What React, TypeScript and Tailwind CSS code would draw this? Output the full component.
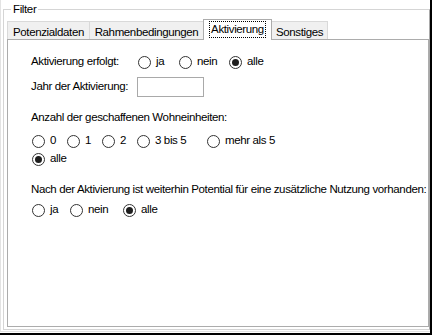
import React from 'react';

const font = { fontFamily: '"Liberation Sans", Arial, sans-serif' };

const Radio: React.FC<{ label: string; checked?: boolean; className?: string }> = ({ label, checked, className = '' }) => (
    <div className={`flex items-center gap-[5px] ${className}`}>
        <span className="w-[13px] h-[13px] shrink-0 rounded-full border border-[#333] bg-white flex items-center justify-center">
            {checked && <span className="w-[7px] h-[7px] rounded-full bg-[#1e1e1e]" />}
        </span>
        <span className="whitespace-nowrap">{label}</span>
    </div>
);

const tabs = [
    { name: 'Potenzialdaten', w: 'w-[83px]' },
    { name: 'Rahmenbedingungen', w: 'w-[115px]' },
    { name: 'Aktivierung', w: 'w-[69px]', active: true },
    { name: 'Sonstiges', w: 'w-[57px]' },
];

export default function App() {
    return (
        <div
            className="w-[432px] h-[335px] box-border bg-white border-r-2 border-b-2 border-black flex flex-col text-[11.5px] tracking-[-0.37px] text-black leading-none"
            style={font}
        >
            <div className="flex-1 mb-px border-l border-b border-[#e3e3e3] pt-[9px] pl-[2px] pb-px flex flex-col">
                {/* group box */}
                <div className="flex-1 relative border border-[#d5d5d5] border-r-[#a9a9a9] pt-[9px] pl-[3px] pb-[2px] flex flex-col">
                    <span className="absolute left-[7px] top-[-7px] bg-white px-[2px] leading-[13px]">Filter</span>

                    {/* tab strip */}
                    <div className="flex items-end h-[20px] relative z-10">
                        {tabs.map((t, i) =>
                            t.active ? (
                                <div
                                    key={t.name}
                                    className={`${t.w} -ml-px h-[21px] -mb-px bg-white border border-b-0 border-[#acacac] flex justify-center pt-px relative z-10`}
                                >
                                    <span className="h-[17px] px-[1px] border border-dotted border-black flex items-center">{t.name}</span>
                                </div>
                            ) : (
                                <div
                                    key={t.name}
                                    className={`${t.w} ${i > 0 ? '-ml-px' : ''} h-[18px] bg-[#f0f0f0] border border-b-0 border-[#d9d9d9] flex items-center justify-center pt-[4px]`}
                                >
                                    {t.name}
                                </div>
                            )
                        )}
                    </div>

                    {/* tab page */}
                    <div className="flex-1 border border-[#acacac] bg-white flex flex-col">
                        <div className="mt-[12px] h-[20px] flex items-center pl-[23px]">
                            <span className="w-[107px] whitespace-nowrap">Aktivierung erfolgt:</span>
                            <Radio label="ja" className="w-[41px]" />
                            <Radio label="nein" className="w-[50px]" />
                            <Radio label="alle" checked />
                        </div>

                        <div className="mt-[5px] h-[20px] flex items-center pl-[23px]">
                            <span className="w-[106px] whitespace-nowrap">Jahr der Aktivierung:</span>
                            <div className="w-[67px] h-[20px] border border-[#a9a9a9] bg-white" />
                        </div>

                        <div className="mt-[13px] h-[16px] flex items-center pl-[23px] whitespace-nowrap">
                            Anzahl der geschaffenen Wohneinheiten:
                        </div>

                        <div className="mt-[6px] h-[18px] flex items-center pl-[24px]">
                            <Radio label="0" className="w-[35px]" />
                            <Radio label="1" className="w-[35px]" />
                            <Radio label="2" className="w-[35px]" />
                            <Radio label="3 bis 5" className="w-[70px]" />
                            <Radio label="mehr als 5" />
                        </div>

                        <div className="h-[18px] flex items-center pl-[24px]">
                            <Radio label="alle" checked />
                        </div>

                        <div className="mt-[14px] h-[16px] flex items-center pl-[23px] whitespace-nowrap">
                            Nach der Aktivierung ist weiterhin Potential für eine zusätzliche Nutzung vorhanden:
                        </div>

                        <div className="mt-[3px] h-[18px] flex items-center pl-[24px]">
                            <Radio label="ja" className="w-[38px]" />
                            <Radio label="nein" className="w-[53px]" />
                            <Radio label="alle" checked />
                        </div>
                    </div>
                </div>
            </div>
        </div>
    );
}
